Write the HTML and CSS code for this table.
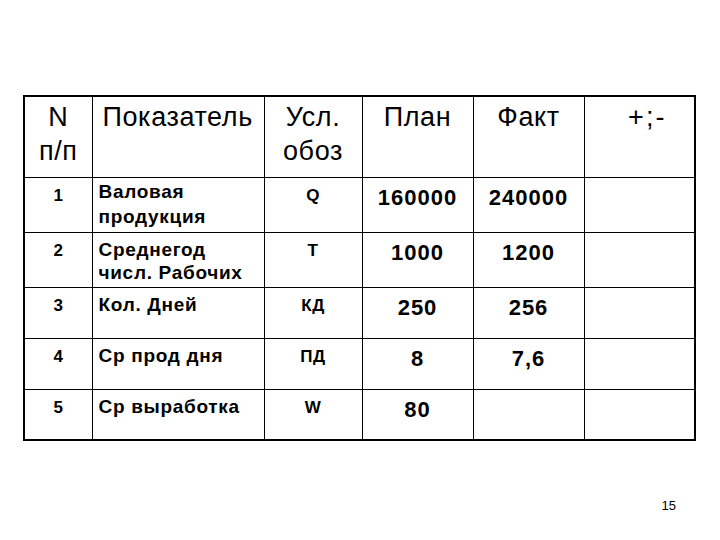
FILE: index.html
```html
<!DOCTYPE html>
<html lang="ru">
<head>
<meta charset="utf-8">
<link rel="stylesheet" href="styles.css">
</head>
<body>
<div class="slide">
  <table class="grid">
    <colgroup>
      <col class="c-num">
      <col class="c-name">
      <col class="c-sym">
      <col class="c-val">
      <col class="c-val">
      <col class="c-val">
    </colgroup>
    <thead>
      <tr class="head">
        <th class="center">N<br>п/п</th>
        <th class="left">Показатель</th>
        <th class="center">Усл.<br>обоз</th>
        <th class="center">План</th>
        <th class="center">Факт</th>
        <th class="center pm">+;-</th>
      </tr>
    </thead>
    <tbody>
      <tr class="r-tall">
        <td class="idx">1</td>
        <td class="name first">Валовая<br>продукция</td>
        <td class="sym">Q</td>
        <td class="val">160000</td>
        <td class="val">240000</td>
        <td></td>
      </tr>
      <tr class="r-tall">
        <td class="idx">2</td>
        <td class="name">Среднегод<br>числ. Рабочих</td>
        <td class="sym">Т</td>
        <td class="val">1000</td>
        <td class="val">1200</td>
        <td></td>
      </tr>
      <tr class="r-std">
        <td class="idx">3</td>
        <td class="name">Кол. Дней</td>
        <td class="sym">КД</td>
        <td class="val">250</td>
        <td class="val">256</td>
        <td></td>
      </tr>
      <tr class="r-std">
        <td class="idx">4</td>
        <td class="name">Ср прод дня</td>
        <td class="sym">ПД</td>
        <td class="val">8</td>
        <td class="val">7,6</td>
        <td></td>
      </tr>
      <tr class="r-std">
        <td class="idx">5</td>
        <td class="name">Ср выработка</td>
        <td class="sym">W</td>
        <td class="val">80</td>
        <td class="val"></td>
        <td></td>
      </tr>
    </tbody>
  </table>
  <div class="page-no">15</div>
</div>
</body>
</html>
```

FILE: styles.css
```css
html, body {
  margin: 0;
  padding: 0;
  background: #ffffff;
}

.slide {
  width: 720px;
  height: 540px;
  box-sizing: border-box;
  padding: 95px 0 0 23px;
  font-family: "Liberation Sans", Arial, sans-serif;
  color: #000;
  display: flex;
  flex-direction: column;
}

.grid {
  border-collapse: collapse;
  table-layout: fixed;
  width: 672px;
  border: 2px solid #000;
}

.c-num { width: 68px; }
.c-name { width: 172px; }
.c-sym { width: 98px; }
.c-val { width: 111px; }

.grid th,
.grid td {
  border: 1px solid #000;
  vertical-align: top;
  padding: 0;
}

.head { height: 81px; }
.r-tall { height: 55px; }
.r-std { height: 51px; }

.grid th {
  font-weight: normal;
  font-size: 27px;
  letter-spacing: 0.6px;
  line-height: 34px;
  padding-top: 3px;
}

.center { text-align: center; }
.left { text-align: left; padding-left: 10px !important; }
.pm { padding-left: 16px !important; letter-spacing: 2px !important; }

.idx,
.sym {
  font-weight: bold;
  font-size: 17px;
  line-height: 22px;
  text-align: center;
  padding-top: 7px !important;
}

.sym { letter-spacing: 0.5px; }

.name {
  font-weight: bold;
  font-size: 19px;
  letter-spacing: 0.7px;
  line-height: 23px;
  padding: 5px 0 0 6px !important;
}

.name.first {
  line-height: 25px;
  padding-top: 1px !important;
}

.val {
  font-weight: bold;
  font-size: 22px;
  letter-spacing: 1px;
  line-height: 26px;
  text-align: center;
  padding-top: 7px !important;
}

.page-no {
  align-self: flex-end;
  margin: 58px 44px 0 0;
  font-size: 13px;
  line-height: 14px;
}
```
